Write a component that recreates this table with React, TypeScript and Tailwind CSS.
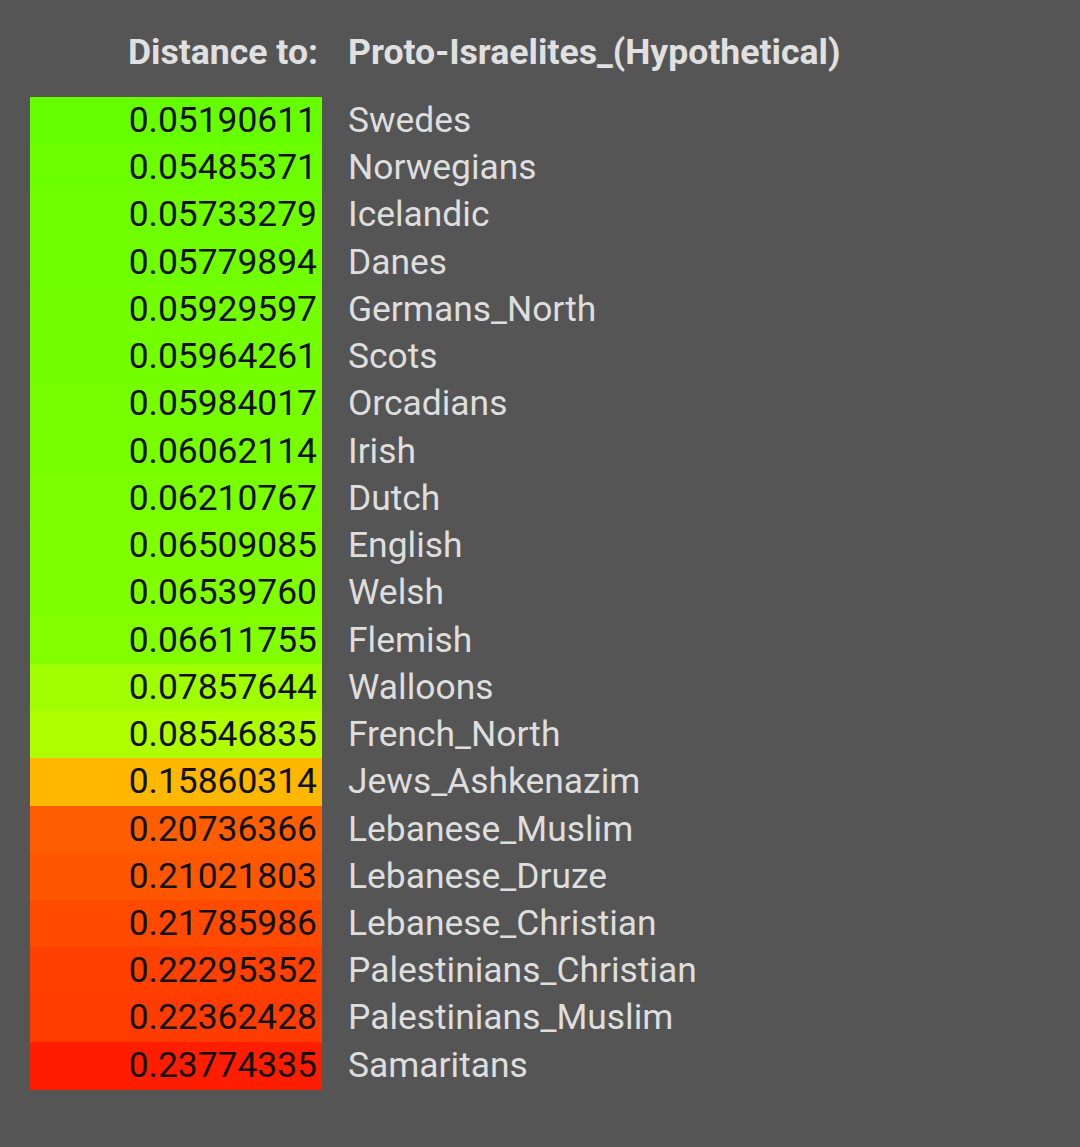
import React from "react";

const rows: [string, string, string][] = [
  ["0.05190611", "Swedes", "#66ff00"],
  ["0.05485371", "Norwegians", "#6bff00"],
  ["0.05733279", "Icelandic", "#6fff00"],
  ["0.05779894", "Danes", "#70ff00"],
  ["0.05929597", "Germans_North", "#73ff00"],
  ["0.05964261", "Scots", "#74ff00"],
  ["0.05984017", "Orcadians", "#75ff00"],
  ["0.06062114", "Irish", "#77ff00"],
  ["0.06210767", "Dutch", "#7aff00"],
  ["0.06509085", "English", "#7fff00"],
  ["0.06539760", "Welsh", "#80ff00"],
  ["0.06611755", "Flemish", "#82ff00"],
  ["0.07857644", "Walloons", "#a0ff00"],
  ["0.08546835", "French_North", "#afff00"],
  ["0.15860314", "Jews_Ashkenazim", "#ffb700"],
  ["0.20736366", "Lebanese_Muslim", "#ff5e00"],
  ["0.21021803", "Lebanese_Druze", "#ff5700"],
  ["0.21785986", "Lebanese_Christian", "#ff4a00"],
  ["0.22295352", "Palestinians_Christian", "#ff4000"],
  ["0.22362428", "Palestinians_Muslim", "#ff3c00"],
  ["0.23774335", "Samaritans", "#ff1d00"],
];

export default function App() {
  return (
    <div
      className="w-[1080px] h-[1147px] bg-[#555555] pl-[30px] pt-[31px]"
      style={{ fontFamily: "Roboto, 'Noto Sans', sans-serif" }}
    >
      <div className="grid grid-cols-[292px_auto] gap-x-[26px] text-[35.6px] leading-[42px] font-bold text-[#e0e0e0] mb-[24px]">
        <div className="text-right pr-[4px]">Distance to:</div>
        <div>Proto-Israelites_(Hypothetical)</div>
      </div>
      <div className="flex flex-col">
        {rows.map(([v, name, c]) => (
          <div key={name} className="grid grid-cols-[292px_auto] gap-x-[26px] h-[47.24px] text-[35.4px] leading-[47.24px]">
            <div
              className="text-right pr-[5px] text-[#111111] border-b border-black/5"
              style={{ backgroundColor: c }}
            >
              {v}
            </div>
            <div className="text-[#dedede]">{name}</div>
          </div>
        ))}
      </div>
    </div>
  );
}
